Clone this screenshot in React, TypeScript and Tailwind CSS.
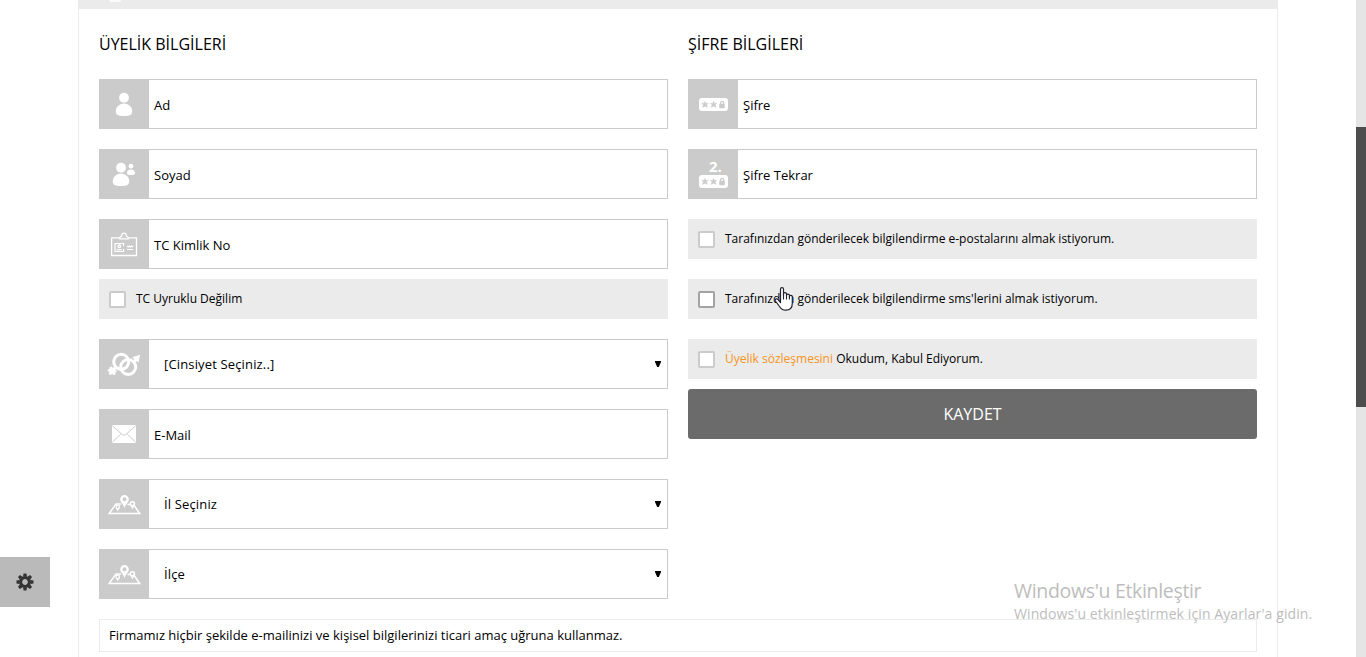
import type { ReactNode } from "react";

const Icon = ({ children }: { children: ReactNode }) => (
  <svg viewBox="0 0 50 50" width="50" height="50" fill="#fff" className="-my-px -ml-px shrink-0 bg-[#cbcbcb]">
    {children}
  </svg>
);

const PersonIcon = () => (
  <Icon>
    <circle cx="25" cy="18.7" r="4.9" />
    <path d="M25 24.6c5 0 8.2 3.8 8.2 7.6 0 3.7-2.4 4.8-8.2 4.8s-8.2-1.1-8.2-4.8c0-3.8 3.2-7.6 8.2-7.6z" />
  </Icon>
);

const PeopleIcon = () => (
  <Icon>
    <circle cx="22" cy="18.7" r="4.9" />
    <path d="M22 24.6c5 0 8.2 3.8 8.2 7.6 0 3.7-2.4 4.8-8.2 4.8s-8.2-1.1-8.2-4.8c0-3.8 3.2-7.6 8.2-7.6z" />
    <circle cx="32" cy="17.2" r="2.4" />
    <path d="M32 20.6c2.500 0 4.100 1.800 4.100 3.500 0 1.600-1.400 2-4.100 2s-4.100-.4-4.100-2c0-1.700 1.600-3.500 4.100-3.500z" />
  </Icon>
);

const IdIcon = () => (
  <Icon>
    <g fill="none" stroke="#fff">
      <path d="M21 18.9h-8.400v17.600h24.900V18.900H29" strokeWidth="1.300" />
      <path d="M20.700 19.800h8.600c0-2-1.100-2.300-2-2.700v-.6a2.300 2.300 0 0 0-4.600 0v.6c-1 .4-2 .7-2 2.700z" strokeWidth="1.200" />
      <path d="M24.600 27v-2.500h-8.600v8h8.600V30" strokeWidth="1.200" />
      <circle cx="20.300" cy="27.300" r="1.300" strokeWidth="1.300" />
      <path d="M17.700 30.700h5.200M28 27l1.200 1 1.200-1 1.200 1 1.200-1 1.200 1M28 30.500h6" strokeWidth="1.200" />
    </g>
  </Icon>
);

const GenderIcon = () => (
  <Icon>
    <g fill="none" stroke="#fff" strokeWidth="3">
      <circle cx="22.200" cy="22.800" r="7.500" />
      <circle cx="29.200" cy="28" r="7.500" />
      <path d="M35 22.500l3-3M16.500 28.500l-3 3" />
    </g>
    <path d="M41 15.800l-1.500 7.800-2.200-1.700-2-2-2.200-1.600z" />
    <circle cx="13.300" cy="31.600" r="2.900" />
    <circle cx="10.500" cy="31.300" r="1.600" />
    <circle cx="16" cy="32" r="1.600" />
    <circle cx="11.500" cy="34.300" r="1.600" />
    <circle cx="15" cy="34.500" r="1.600" />
    <circle cx="12" cy="29" r="1.600" />
  </Icon>
);

const MailIcon = () => (
  <Icon>
    <rect x="13" y="16" width="24" height="18" rx="1" />
    <path d="M13.500 17l9.800 8.600q1.700 1.400 3.400 0L36.500 17M13.500 33l8.300-8M36.500 33l-8.300-8" fill="none" stroke="#cbcbcb" />
  </Icon>
);

const MapIcon = () => (
  <Icon>
    <path d="M22 24.900h-5L10.200 34.500h30.500L34.500 25.500M28.500 25.500h2.500" fill="none" stroke="#fff" strokeWidth="1.500" />
    <path fillRule="evenodd" d="M25.500 16a4.300 4.300 0 0 1 4.300 4.300c0 2.800-2.500 4-4.300 8.700-1.800-4.700-4.300-5.900-4.300-8.700A4.300 4.300 0 0 1 25.500 16zm0 2.300a2 2 0 1 0 0 4 2 2 0 0 0 0-4z" />
    <path fillRule="evenodd" d="M33.400 22a2.800 2.800 0 0 1 2.800 2.800c0 1.800-1.600 2.600-2.800 5.600-1.200-3-2.800-3.800-2.800-5.600a2.800 2.800 0 0 1 2.800-2.800zm0 1.500a1.300 1.300 0 1 0 0 2.600 1.300 1.300 0 0 0 0-2.600z" />
    <path fillRule="evenodd" d="M18.800 25.600a2.300 2.300 0 0 1 2.300 2.300c0 1.500-1.300 2.100-2.300 4.500-1-2.400-2.300-3-2.300-4.500a2.300 2.300 0 0 1 2.300-2.300zm0 1.200a1.100 1.100 0 1 0 0 2.200 1.100 1.100 0 0 0 0-2.200z" />
  </Icon>
);

const starPath = "M0-3.300l.9 2 2.300-.2-1.700 1.700 1.100 2.400L0 1.600l-2.600 1 1.100-2.400-1.700-1.700 2.300.2z";

const PasswordBadge = ({ y }: { y: number }) => (
  <g transform={`translate(11 ${y})`}>
    <rect width="29" height="13" rx="3" />
    <g fill="#cbcbcb" stroke="#cbcbcb" strokeWidth=".5">
      <path d={starPath} transform="translate(6 6.700)" />
      <path d={starPath} transform="translate(14.600 6.700)" />
      <rect x="20.500" y="5.900" width="5" height="4" rx=".5" />
    </g>
    <path d="M21.500 6V5a1.600 1.600 0 0 1 3.200 0v1" fill="none" stroke="#cbcbcb" strokeWidth="1.300" />
  </g>
);

const PasswordIcon = () => (
  <Icon>
    <PasswordBadge y={19} />
  </Icon>
);

const PasswordAgainIcon = () => (
  <Icon>
    <text x="21" y="23" className="font-['Open_Sans'] text-[15px] font-bold">2.</text>
    <PasswordBadge y={26} />
  </Icon>
);

const Field = ({ icon, label }: { icon: ReactNode; label: string }) => (
  <div className="flex h-[50px] items-center border border-[#cbcbcb] bg-white">
    {icon}
    <span className="pt-px pl-[5px]">{label}</span>
  </div>
);

const SelectField = ({ icon, label }: { icon: ReactNode; label: string }) => (
  <div className="flex h-[50px] items-center border border-[#cbcbcb] bg-white pr-[6px]">
    {icon}
    <span className="flex-1 pb-px pl-[15px] tracking-[0.15px]">{label}</span>
    <svg width="6" height="6" viewBox="0 0 6 6" className="-mt-px">
      <path d="M0 0h6v1L3.800 6H2.200L0 1z" />
    </svg>
  </div>
);

const CheckRow = ({ children, hovered = false }: { children: ReactNode; hovered?: boolean }) => (
  <label className="flex h-10 items-center bg-[#ebebeb] pl-[10px] text-[12px]">
    <span
      className={
        hovered
          ? "mt-px size-[17px] rounded-[2px] border-2 border-[#a3a3a3] bg-white"
          : "mt-px size-[17px] rounded-[2px] border-2 border-[#cbcbcb] bg-white"
      }
    />
    <span className="pl-[10px]">{children}</span>
  </label>
);

export default function App() {
  return (
    <div className="relative flex h-[657px] w-full justify-between overflow-hidden bg-white font-['Open_Sans',sans-serif] text-[13px] leading-[18px] text-black">
      <aside className="flex w-[78px] items-end pb-[50px]">
        <button className="flex size-[50px] items-center justify-center bg-[#bababa]">
          <svg width="18" height="18" viewBox="-9 -9 18 18">
            <g fill="#333">
              <path d="M-1.400-8.500h2.800l.6 3h-4zM-1.400 8.500h2.800l.6-3h-4z" />
              <path d="M-1.400-8.500h2.800l.6 3h-4zM-1.400 8.500h2.800l.6-3h-4z" transform="rotate(45)" />
              <path d="M-1.400-8.500h2.800l.6 3h-4zM-1.400 8.500h2.800l.6-3h-4z" transform="rotate(90)" />
              <path d="M-1.400-8.500h2.800l.6 3h-4zM-1.400 8.500h2.800l.6-3h-4z" transform="rotate(135)" />
            </g>
            <circle r="4.400" fill="none" stroke="#333" strokeWidth="3" />
          </svg>
        </button>
      </aside>

      <main className="flex w-[1200px] flex-col border-x border-[#ebebeb]">
        <header className="flex h-[9px] shrink-0 items-start bg-[#ebebeb] pl-[30px]">
          <span className="h-[2px] w-3 rounded-b-full bg-white/80" />
        </header>
        <div className="grid grid-cols-2 gap-x-5 px-5 pt-6">
          <section className="flex flex-col">
            <h2 className="mb-6 text-[16px] leading-[22px]">ÜYELİK BİLGİLERİ</h2>
            <Field icon={<PersonIcon />} label="Ad" />
            <div className="h-5" />
            <Field icon={<PeopleIcon />} label="Soyad" />
            <div className="h-5" />
            <Field icon={<IdIcon />} label="TC Kimlik No" />
            <div className="h-[10px]" />
            <CheckRow>TC Uyruklu Değilim</CheckRow>
            <div className="mt-5 flex flex-col gap-5">
              <SelectField icon={<GenderIcon />} label="[Cinsiyet Seçiniz..]" />
              <Field icon={<MailIcon />} label="E-Mail" />
              <SelectField icon={<MapIcon />} label="İl Seçiniz" />
              <SelectField icon={<MapIcon />} label="İlçe" />
            </div>
          </section>
          <section className="flex flex-col">
            <h2 className="mb-6 text-[16px] leading-[22px]">ŞİFRE BİLGİLERİ</h2>
            <div className="flex flex-col gap-5">
              <Field icon={<PasswordIcon />} label="Şifre" />
              <Field icon={<PasswordAgainIcon />} label="Şifre Tekrar" />
              <CheckRow>Tarafınızdan gönderilecek bilgilendirme e-postalarını almak istiyorum.</CheckRow>
              <CheckRow hovered>Tarafınızdan gönderilecek bilgilendirme sms'lerini almak istiyorum.</CheckRow>
              <CheckRow>
                <a className="text-[#f7941d]">Üyelik sözleşmesini</a> Okudum, Kabul Ediyorum.
              </CheckRow>
            </div>
            <button className="mt-[10px] h-[50px] rounded-[3px] bg-[#6b6b6b] text-[16px] text-white">KAYDET</button>
          </section>
          <p className="col-span-2 mt-5 flex h-[33px] items-center border border-[#ebebeb] pb-[2px] pl-[9px]">
            Firmamız hiçbir şekilde e-mailinizi ve kişisel bilgilerinizi ticari amaç uğruna kullanmaz.
          </p>
        </div>
      </main>

      <div className="flex w-[88px] justify-end">
        <div className="w-[10px] bg-[#e5e5e5] pt-[127px]">
          <div className="h-[280px] bg-[#4d4d4d]" />
        </div>
      </div>

      <div className="absolute top-[578px] left-[1014px] whitespace-nowrap text-[#bdbdbd]">
        <div className="text-[19.500px] leading-[26px] tracking-[-0.33px]">Windows'u Etkinleştir</div>
        <div className="text-[14px] leading-[20px] tracking-[0.1px]">Windows'u etkinleştirmek için Ayarlar'a gidin.</div>
      </div>

      <svg width="20" height="25" viewBox="0 0 20 25" className="absolute top-[287px] left-[774px]">
        <path
          d="M6.500 15.500V2.200c0-2 3-2 3 0v6-1.300c0-1.700 3-1.700 3 0v1.300c0-1.500 2.900-1.500 2.900 0v1.300c0-1.500 2.900-1.400 2.900.3v6.500c0 4.200-2.600 6.900-6.600 6.900-3.200 0-4.800-1.300-6.200-3.700L1.400 14c-.9-1.800 1.400-3 2.700-1.400z"
          fill="#fff"
          stroke="#20202e"
          strokeWidth="1.200"
          strokeLinejoin="round"
        />
        <path d="M9.500 7v5.500M12.500 8v4.500M15.400 9.500v3" stroke="#20202e" strokeWidth="1.100" />
      </svg>
    </div>
  );
}
